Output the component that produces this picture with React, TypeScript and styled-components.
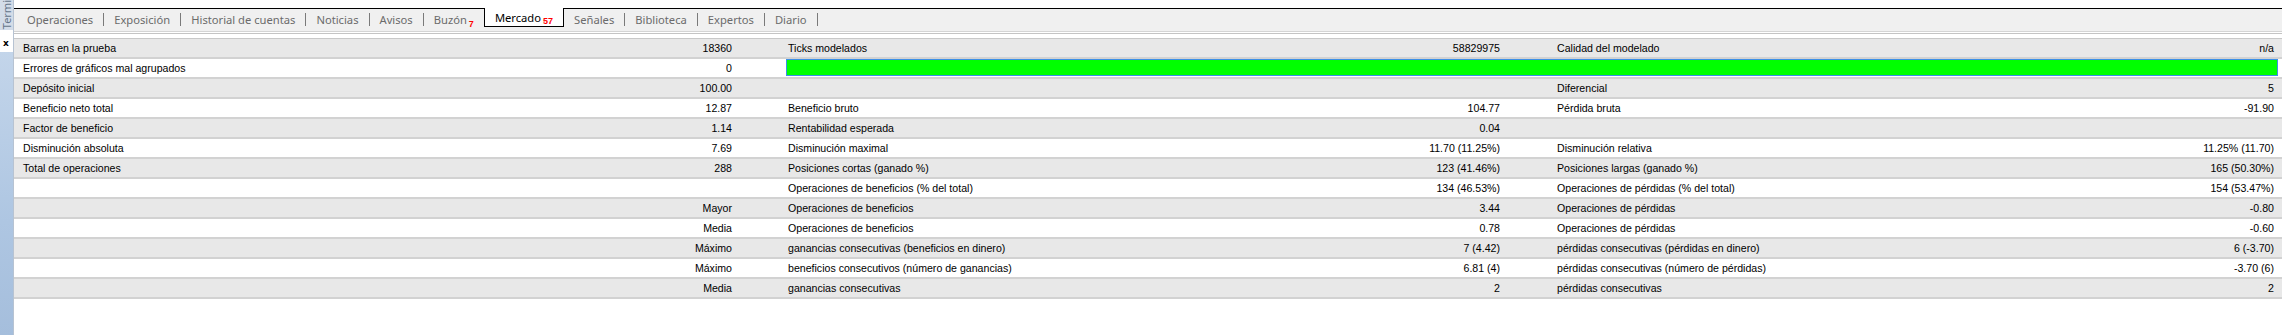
import React from 'react'
import styled, { createGlobalStyle } from 'styled-components'

const GlobalStyle = createGlobalStyle`
  html, body {
    margin: 0;
    padding: 0;
    background: #fff;
  }
  body {
    width: 2282px;
    height: 335px;
    overflow: hidden;
  }
`

const Frame = styled.div`
  display: flex;
  width: 2282px;
  height: 335px;
  background: #fff;
`

const Sidebar = styled.div`
  width: 13px;
  display: flex;
  flex-direction: column;
  border-right: 1px solid #b7c3d2;
`

const SideTitle = styled.div`
  height: 30px;
  background: #d3dce8;
  display: flex;
  align-items: flex-start;
  justify-content: center;
  overflow: hidden;
  span {
    writing-mode: vertical-rl;
    transform: rotate(180deg);
    font-family: "Noto Sans", "Liberation Sans", sans-serif;
    font-size: 11px;
    line-height: 12px;
    color: #65758a;
  }
`

const CloseBox = styled.div`
  height: 22px;
  background: #fff;
  font-family: "DejaVu Sans", sans-serif;
  font-weight: bold;
  font-size: 9px;
  line-height: 9px;
  color: #000;
  padding: 9px 0 0 3px;
  box-sizing: border-box;
`

const SideStrip = styled.div`
  flex: 1;
  background: linear-gradient(180deg, #c3d5ea 0%, #aec6e2 60%, #a5bedc 100%);
`

const Main = styled.div`
  flex: 1;
  display: flex;
  flex-direction: column;
  padding-top: 8px;
`

const TabBar = styled.div`
  height: 22px;
  border-top: 1px solid #000;
  background: #f0f0f0;
  display: flex;
  align-items: flex-start;
  padding-left: 3px;
  font-family: "Noto Sans", "Open Sans", sans-serif;
  font-size: 11.2px;
`

const Tab = styled.div<{ $active?: boolean }>`
  height: ${({ $active }) => ($active ? '18px' : '21px')};
  padding: 0 10px;
  display: flex;
  align-items: center;
  color: ${({ $active }) => ($active ? '#000' : '#6b6b6b')};
  background: ${({ $active }) => ($active ? '#fff' : 'transparent')};
  border: ${({ $active }) => ($active ? '1px solid #000' : 'none')};
  border-top: none;
  white-space: nowrap;
  margin-top: ${({ $active }) => ($active ? '-1px' : '0')};
`

const Badge = styled.span`
  color: #ff0000;
  font-family: "Liberation Sans", sans-serif;
  font-weight: bold;
  font-size: 9px;
  margin-left: 2px;
  position: relative;
  top: 4px;
`

const Sep = styled.span`
  width: 1px;
  height: 13px;
  margin-top: 4px;
  background: #7a7a7a;
`

const Rule = styled.div`
  height: 1px;
  background: #fff;
  border-top: 1px solid #d4d4d4;
  border-bottom: 1px solid #c4c4c4;
  margin-bottom: 4px;
`

const Table = styled.div`
  border-top: 1px solid #c8c8c8;
  font-family: "Liberation Sans", Arial, sans-serif;
  font-size: 10.6px;
  color: #000;
`

const Row = styled.div<{ $alt: boolean }>`
  display: grid;
  grid-template-columns: 466px 305px 400px 362px 400px 335px;
  height: 20px;
  box-sizing: border-box;
  background: ${({ $alt }) => ($alt ? '#e8e8e8' : '#fff')};
  border-bottom: 2px solid #d2d2d2;
`

const Label = styled.div<{ $pad: number }>`
  padding-left: ${({ $pad }) => $pad}px;
  display: flex;
  align-items: center;
  white-space: nowrap;
  overflow: hidden;
`

const Value = styled.div<{ $pad: number }>`
  padding-right: ${({ $pad }) => $pad}px;
  display: flex;
  align-items: center;
  justify-content: flex-end;
  white-space: nowrap;
`

const QualityBar = styled.div`
  grid-column: 3 / 7;
  margin: 0 4px 0 1px;
  height: 17px;
  box-sizing: border-box;
  background: #00ff00;
  border: 1px solid #3c8fe6;
`

type Cells = [string, string, string, string, string, string]

const rows: (Cells | 'bar')[] = [
  ['Barras en la prueba', '18360', 'Ticks modelados', '58829975', 'Calidad del modelado', 'n/a'],
  'bar',
  ['Depósito inicial', '100.00', '', '', 'Diferencial', '5'],
  ['Beneficio neto total', '12.87', 'Beneficio bruto', '104.77', 'Pérdida bruta', '-91.90'],
  ['Factor de beneficio', '1.14', 'Rentabilidad esperada', '0.04', '', ''],
  ['Disminución absoluta', '7.69', 'Disminución maximal', '11.70 (11.25%)', 'Disminución relativa', '11.25% (11.70)'],
  ['Total de operaciones', '288', 'Posiciones cortas (ganado %)', '123 (41.46%)', 'Posiciones largas (ganado %)', '165 (50.30%)'],
  ['', '', 'Operaciones de beneficios (% del total)', '134 (46.53%)', 'Operaciones de pérdidas (% del total)', '154 (53.47%)'],
  ['', 'Mayor', 'Operaciones de beneficios', '3.44', 'Operaciones de pérdidas', '-0.80'],
  ['', 'Media', 'Operaciones de beneficios', '0.78', 'Operaciones de pérdidas', '-0.60'],
  ['', 'Máximo', 'ganancias consecutivas (beneficios en dinero)', '7 (4.42)', 'pérdidas consecutivas (pérdidas en dinero)', '6 (-3.70)'],
  ['', 'Máximo', 'beneficios consecutivos (número de ganancias)', '6.81 (4)', 'pérdidas consecutivas (número de pérdidas)', '-3.70 (6)'],
  ['', 'Media', 'ganancias consecutivas', '2', 'pérdidas consecutivas', '2'],
]

const tabs = [
  { name: 'Operaciones' },
  { name: 'Exposición' },
  { name: 'Historial de cuentas' },
  { name: 'Noticias' },
  { name: 'Avisos' },
  { name: 'Buzón', badge: '7' },
  { name: 'Mercado', badge: '57', active: true },
  { name: 'Señales' },
  { name: 'Biblioteca' },
  { name: 'Expertos' },
  { name: 'Diario' },
]

const Tabs = () => {
  const activeIdx = tabs.findIndex((t) => t.active)
  return (
    <TabBar>
      {tabs.map((t, i) => (
        <React.Fragment key={t.name}>
          <Tab $active={t.active}>
            {t.name}
            {t.badge && <Badge>{t.badge}</Badge>}
          </Tab>
          {i !== activeIdx && i !== activeIdx - 1 && <Sep />}
        </React.Fragment>
      ))}
    </TabBar>
  )
}

const App = () => {
  return (
    <Frame>
      <GlobalStyle />
      <Sidebar>
        <SideTitle><span>Termi</span></SideTitle>
        <CloseBox>x</CloseBox>
        <SideStrip />
      </Sidebar>
      <Main>
        <Tabs />
        <Rule />
        <Table>
          {rows.map((r, i) =>
            r === 'bar' ? (
              <Row key={i} $alt={i % 2 === 0}>
                <Label $pad={9}>Errores de gráficos mal agrupados</Label>
                <Value $pad={53}>0</Value>
                <QualityBar />
              </Row>
            ) : (
              <Row key={i} $alt={i % 2 === 0}>
                <Label $pad={9}>{r[0]}</Label>
                <Value $pad={53}>{r[1]}</Value>
                <Label $pad={3}>{r[2]}</Label>
                <Value $pad={47}>{r[3]}</Value>
                <Label $pad={10}>{r[4]}</Label>
                <Value $pad={8}>{r[5]}</Value>
              </Row>
            )
          )}
        </Table>
      </Main>
    </Frame>
  )
}

export default App
